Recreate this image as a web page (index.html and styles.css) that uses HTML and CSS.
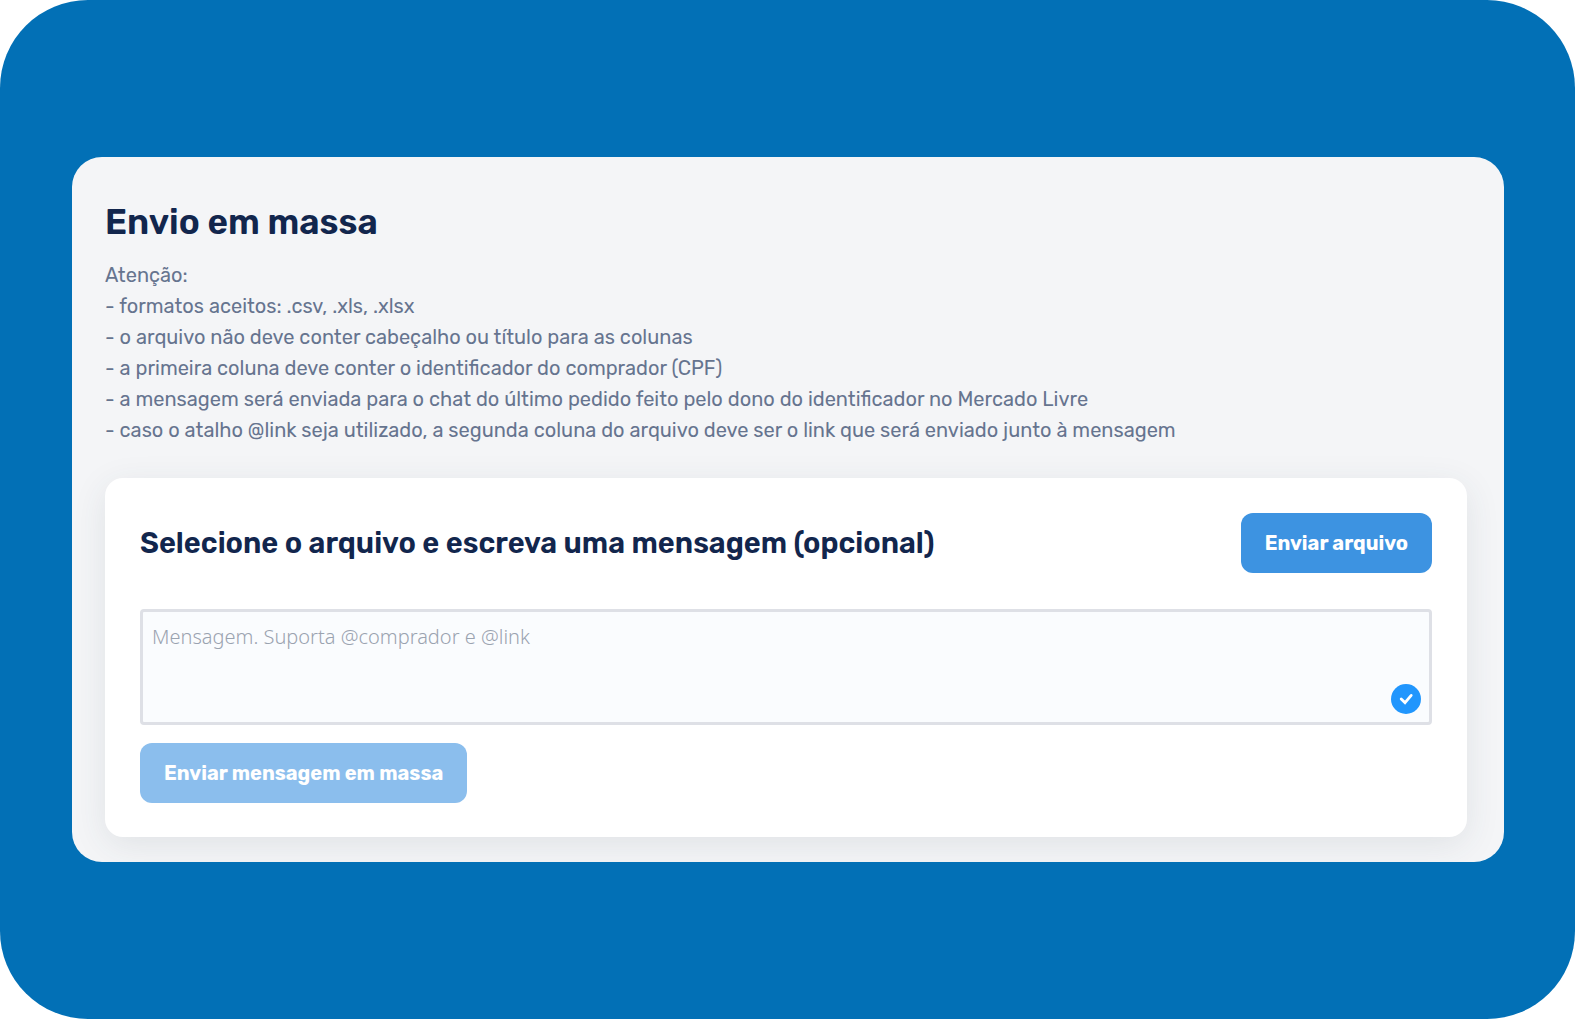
FILE: index.html
```html
<!DOCTYPE html>
<html lang="pt-BR">
<head>
  <meta charset="UTF-8" />
  <meta name="viewport" content="width=device-width, initial-scale=1.0" />
  <title>Envio em massa</title>
  <link rel="stylesheet" href="styles.css">
</head>
<body>

  <div class="backdrop">
    <main class="panel">
      <h1 class="title">Envio em massa</h1>
      <p class="notes">
        Atenção:<br>
        - formatos aceitos: .csv, .xls, .xlsx<br>
        - o arquivo não deve conter cabeçalho ou título para as colunas<br>
        - a primeira coluna deve conter o identificador do comprador (CPF)<br>
        - a mensagem será enviada para o chat do último pedido feito pelo dono do identificador no Mercado Livre<br>
        - caso o atalho @link seja utilizado, a segunda coluna do arquivo deve ser o link que será enviado junto à mensagem
      </p>

      <form class="card">
        <div class="card-header">
          <h2 class="card-title"><label for="message">Selecione o arquivo e escreva uma mensagem (opcional)</label></h2>
          <button type="button" class="btn">Enviar arquivo</button>
        </div>

        <div class="field">
          <textarea id="message" class="message" placeholder="Mensagem. Suporta @comprador e @link"></textarea>
          <svg class="badge" viewBox="0 0 30 30" aria-hidden="true">
            <circle cx="15" cy="15" r="15" fill="#2196fd" />
            <path d="M10.2 15 L14 18.6 L20.2 11.4" fill="none" stroke="#fff" stroke-width="2.8" stroke-linecap="round" stroke-linejoin="miter" />
          </svg>
        </div>

        <button type="submit" class="btn" disabled>Enviar mensagem em massa</button>
      </form>
    </main>
  </div>

</body>
</html>
```

FILE: styles.css
```css
* {
  box-sizing: border-box;
}

body {
  margin: 0;
  background: #fff;
  font-family: Rubik, Roboto, sans-serif;
  color: #12264d;
}

.backdrop {
  display: flex;
  align-items: center;
  min-height: 100vh;
  padding: 40px 71px 40px 72px;
  background: #0270b6;
  border-radius: 88px;
}

.panel {
  flex: 1;
  padding: 45px 37px 25px 33px;
  background: #f4f5f7;
  border-radius: 30px;
  overflow: hidden;
}

.title {
  margin: 0 0 18px;
  font-size: 35px;
  font-weight: 600;
  line-height: 40px;
}

.notes {
  margin: 0 0 32px;
  font-size: 20px;
  line-height: 31px;
  color: #66748f;
}

.card {
  padding: 35px 35px 34px;
  background: #fff;
  border-radius: 18px;
  box-shadow: 0 8px 34px rgba(50, 70, 80, 0.1);
}

.card-header {
  display: flex;
  align-items: center;
  justify-content: space-between;
  gap: 24px;
  margin-bottom: 36px;
}

.card-title {
  margin: 0;
  font-size: 29px;
  font-weight: 600;
  line-height: 36px;
}

.btn {
  height: 60px;
  padding: 0 24px;
  border: none;
  border-radius: 12px;
  background: #3d93e1;
  color: #fff;
  font-family: inherit;
  font-size: 20px;
  font-weight: 700;
  white-space: nowrap;
  cursor: pointer;
}

.btn:disabled {
  background: #8bbeed;
  cursor: not-allowed;
}

.field {
  position: relative;
  margin-bottom: 18px;
}

.message {
  display: block;
  width: 100%;
  height: 116px;
  padding: 10px 9px;
  border: 3px solid #dee0e6;
  border-radius: 4px;
  background: #fafcfe;
  color: #12264d;
  font-family: "Segoe UI", "Noto Sans", sans-serif;
  font-size: 20px;
  font-weight: 300;
  line-height: 30px;
  resize: none;
}

.message::placeholder {
  color: #9aa3b0;
  opacity: 1;
}

.badge {
  position: absolute;
  right: 11px;
  bottom: 11px;
  width: 30px;
  height: 30px;
}
```
